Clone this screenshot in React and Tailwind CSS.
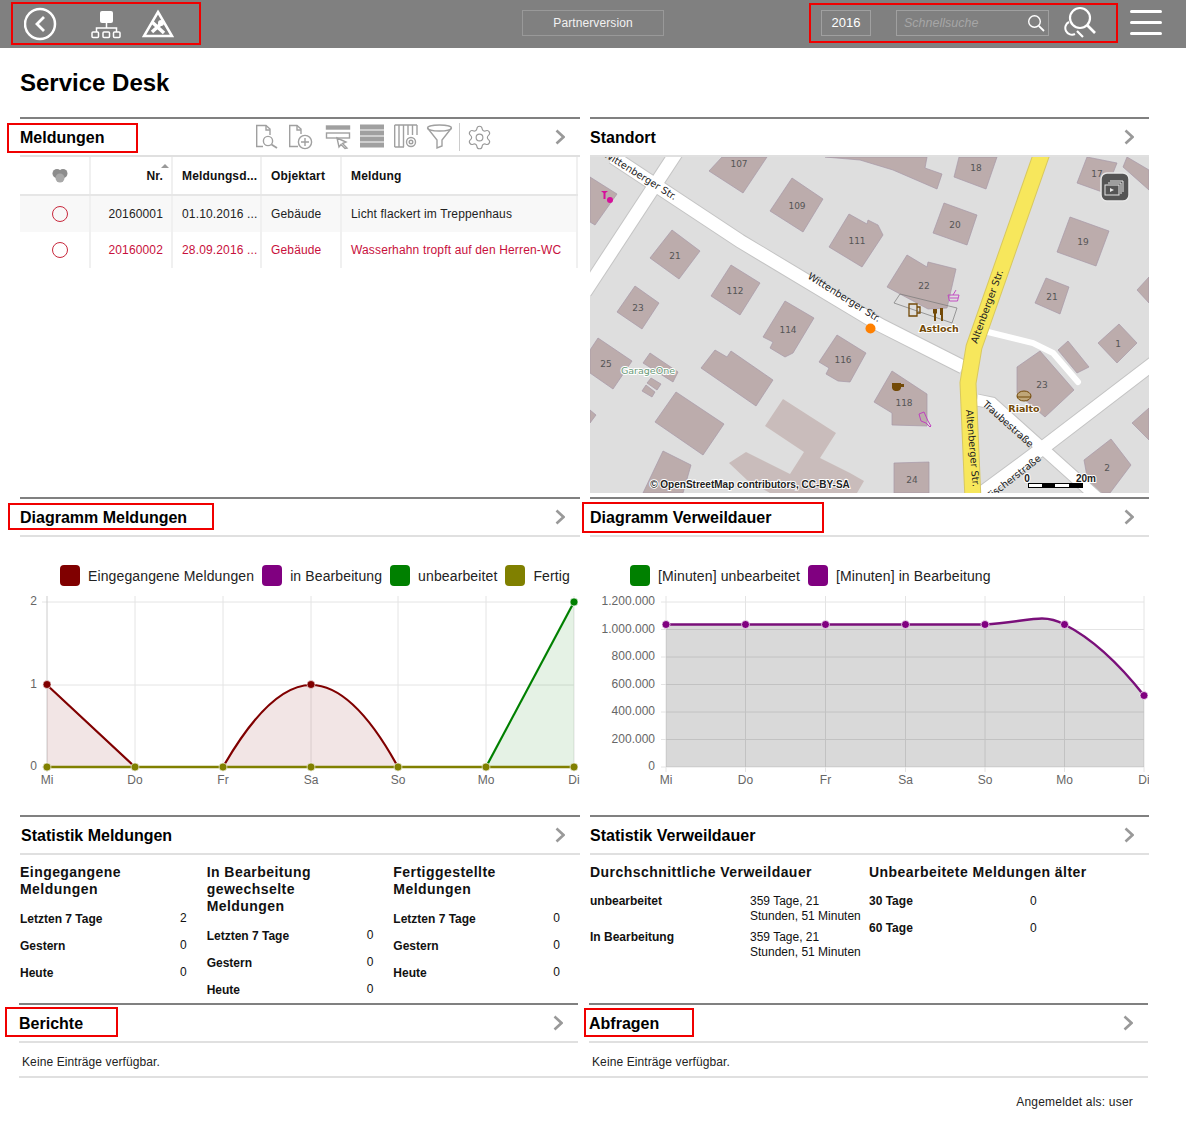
import React from "react";
import { Settings } from "lucide-react";

const buildings = [
  "709,171 743,193 767,157 722,157",
  "792,178 823,199 803,232 770,211",
  "849,214 867,224 868,220 878,225 883,235 862,267 829,247",
  "672,230 700,251 679,279 650,258",
  "731,265 760,283 740,315 711,296",
  "635,286 659,303 642,329 617,312",
  "785,301 814,318 793,353 785,357 770,348 773,342 763,337",
  "837,335 866,353 850,382 838,381 826,374 829,368 819,362",
  "598,338 632,361 613,389 590,373 590,350",
  "650,353 678,372 673,382 643,363",
  "651,378 661,384 657,390 647,383",
  "646,385 655,392 652,397 642,391",
  "715,350 727,357 731,351 773,380 756,406 701,368",
  "676,392 724,424 703,455 655,422",
  "663,451 691,465 683,493 643,493",
  "590,177 617,194 595,225 590,222",
  "590,410 596,415 590,423",
  "825,157 927,157 925,168 942,174 937,189 893,170 860,160",
  "959,157 997,157 986,189 954,177",
  "944,203 977,215 967,245 933,233",
  "907,255 927,267 928,262 956,269 947,308 928,309 887,287",
  "1070,217 1109,231 1096,266 1057,252",
  "1046,278 1069,287 1060,314 1035,303",
  "1119,324 1137,343 1117,363 1098,343",
  "1087,157 1117,163 1105,193 1077,183",
  "1127,157 1149,170 1149,190 1123,167",
  "1137,290 1149,277 1149,303",
  "1068,341 1089,367 1077,373 1058,350",
  "1040,351 1074,390 1045,417 1017,393 1017,367",
  "1149,408 1132,423 1149,440",
  "1111,439 1131,465 1110,493 1090,493 1084,460",
  "892,371 927,394 927,426 892,425 892,413 874,402",
  "894,463 929,462 929,493 894,493",
];

const houseNumbers = [
  ["107", 739, 167], ["109", 797, 209], ["111", 857, 244], ["21", 675, 259], ["112", 735, 294],
  ["23", 638, 311], ["114", 788, 333], ["116", 843, 363], ["25", 606, 367], ["18", 976, 171],
  ["20", 955, 228], ["22", 924, 289], ["19", 1083, 245], ["21", 1052, 300], ["1", 1118, 347],
  ["17", 1097, 177], ["23", 1042, 388], ["2", 1107, 471], ["118", 904, 406], ["24", 912, 483],
];

function MapView() {
  return (
    <svg viewBox="590 157 559 336" className="block w-[559px] h-[336px]" fontFamily="DejaVu Sans">
      <rect x="590" y="157" width="559" height="336" fill="#dedede" />
      <polygon points="783,399 836,433 820,458 850,473 864,481 857,493 770,493 747,480 729,463 746,452 790,474 804,452 765,426" fill="#c9bcbb" />
      <g fill="#bcacac" stroke="#a698a8" strokeWidth="0.7">
        {buildings.map((p, i) => <polygon key={i} points={p} />)}
      </g>
      <polygon points="900,294 957,308 952,323 894,303" fill="none" stroke="#777" strokeWidth="0.7" />

      {/* roads */}
      <g fill="none" stroke="#c4c4c4" strokeWidth="15">
        <path d="M678 150 L585 292" />
        <path d="M613 157 L740 241 L880 325 L963 367" />
        <path d="M977 400 L992 403 L1100 500" strokeWidth="13" />
        <path d="M1155 362 L1040 450 L975 498" />
      </g>
      <g fill="none" stroke="#fff" strokeWidth="13">
        <path d="M678 150 L585 292" />
        <path d="M613 157 L740 241 L880 325 L963 367" />
        <path d="M977 400 L992 403 L1100 500" strokeWidth="11" />
        <path d="M1155 362 L1040 450 L975 498" />
        <path d="M988 332 L1033 343 L1053 353 L1078 382" strokeWidth="6" strokeLinecap="round" />
      </g>
      <path d="M1043 150 L974 347 L968 383 L973 500" fill="none" stroke="#d8c860" strokeWidth="17" />
      <path d="M1043 150 L974 347 L968 383 L973 500" fill="none" stroke="#f7e75c" strokeWidth="15" />

      <g fontSize="9" fill="#555" textAnchor="middle">
        {houseNumbers.map(([t, x, y], i) => <text key={i} x={x} y={y}>{t}</text>)}
      </g>

      <g fontSize="9.800" fill="#222">
        <text transform="translate(603 156) rotate(32)">Wittenberger Str.</text>
        <text transform="translate(807 278) rotate(32)">Wittenberger Str.</text>
        <text transform="translate(977 344) rotate(-70)">Altenberger Str.</text>
        <text transform="translate(966 410) rotate(85)">Altenberger Str.</text>
        <text transform="translate(982 405) rotate(42)">Traubestraße</text>
        <text transform="translate(990 500) rotate(-38)">Fischerstraße</text>
      </g>

      <text x="648" y="374" fontSize="9.500" fill="#6a9a78" textAnchor="middle" stroke="#fff" strokeWidth="2" paintOrder="stroke">GarageOne</text>
      <text x="939" y="332" fontSize="9.500" fontWeight="700" fill="#734a08" textAnchor="middle" stroke="#fff" strokeWidth="2" paintOrder="stroke">Astloch</text>
      <text x="1024" y="412" fontSize="9.500" fontWeight="700" fill="#734a08" textAnchor="middle" stroke="#fff" strokeWidth="2" paintOrder="stroke">Rialto</text>

      {/* pois */}
      <g fill="#d6109a">
        <path d="M601 191 h7 l-2.500 2 v6 h-2 v-6 z" />
        <circle cx="610" cy="200" r="3" />
      </g>
      <g fill="none" stroke="#734a08" strokeWidth="1.300">
        <path d="M909 304 h8 v12 h-8 z M917 307 h3 v6 h-3" />
      </g>
      <path d="M933 309 h4 v4 l-1 1 v7 h-2 v-7 l-1 -1 z M940 308 h3 v13 h-2 v-6 h-1 z" fill="#734a08" />
      <g fill="none" stroke="#c040c0" strokeWidth="0.900">
        <path d="M948 295 h11 l-1.500 6 h-8 z M950 298 h8 M953 295 l3 -5" />
      </g>
      <path d="M892 383 h9 v5 a4 4 0 0 1 -4 3 h-2 a4 4 0 0 1 -3 -3 z M901 384 h3 v3 h-3 z" fill="#734a08" />
      <path d="M919 414 l5 -2 l4 9 l3 5 l-1 1 l-4 -4 l-5 -2 z" fill="none" stroke="#c040c0" strokeWidth="1" />
      <ellipse cx="1024" cy="396" rx="7" ry="5" fill="#bfa678" stroke="#734a08" />
      <path d="M1017 397 h14" stroke="#734a08" />
      <circle cx="870.500" cy="328.500" r="5" fill="#ff8000" />

      {/* layer button */}
      <rect x="1101" y="173" width="28" height="28" rx="6" fill="#555" stroke="#e8e8e8" strokeWidth="1.500" />
      <g fill="none" stroke="#e8e8e8" strokeWidth="1">
        <path d="M1110 181 h13 v11 M1108 183 h13 v11" />
        <rect x="1105" y="185" width="14" height="10" fill="#555" />
      </g>
      <path d="M1110 188 l4 2 l-4 2 z" fill="#e8e8e8" />

      {/* scale + attribution */}
      <text x="750" y="488" fontFamily="Liberation Sans" fontSize="10" fontWeight="700" fill="#222" textAnchor="middle" stroke="#fff" strokeWidth="2" paintOrder="stroke">© OpenStreetMap contributors, CC-BY-SA</text>
      <text x="1027" y="482" fontFamily="Liberation Sans" fontSize="10" fontWeight="700" fill="#222" textAnchor="middle" stroke="#fff" strokeWidth="2" paintOrder="stroke">0</text>
      <text x="1086" y="482" fontFamily="Liberation Sans" fontSize="10" fontWeight="700" fill="#222" textAnchor="middle" stroke="#fff" strokeWidth="2" paintOrder="stroke">20m</text>
      <rect x="1028" y="483" width="55" height="5" fill="#000" />
      <rect x="1029" y="484" width="13" height="3" fill="#fff" />
      <rect x="1055" y="484" width="14" height="3" fill="#fff" />
    </svg>
  );
}

function Chevron() {
  return (
    <svg width="10" height="16" viewBox="0 0 10 16" className="shrink-0">
      <path d="M1.500 1.500 L8.500 8 L1.500 14.500" fill="none" stroke="#999" strokeWidth="2.600" />
    </svg>
  );
}

function Toolbar() {
  return (
    <div className="flex items-center ml-auto mr-[15px]">
      <svg width="206" height="28" viewBox="256 124 206 28" className="shrink-0">
        <g fill="none" stroke="#a0a0a0" strokeWidth="1.400">
          <path d="M270 136 V130 L266 126.500 H256.700 V147.500 H263" />
          <path d="M266 126.500 V131 H270" />
          <circle cx="268" cy="142" r="4.600" />
          <path d="M271.500 145.500 L277 149" strokeWidth="1.800" />

          <path d="M301 135 V130 L297 126.500 H289.700 V147.500 H298" />
          <path d="M297 126.500 V131 H301" />
          <circle cx="305" cy="143" r="6.600" />
          <path d="M305 139 V147 M301 143 H309" />

          <rect x="326.500" y="127" width="23" height="3" fill="#a0a0a0" />
          <rect x="326.500" y="134" width="23" height="5" />
          <path d="M337 139 L346 143 L342.500 144.500 L347 149 L345 149.500 L341 145.500 L339 148 Z" fill="#fff" />

          <path d="M394.700 126 V148 M399 126 V148 M403.500 126 V148 M408 126 V136 M412.500 126 V136 M417 126 V136 M394.700 126 H417 M394.700 148 H404" />
          <circle cx="411" cy="143" r="4.500" />
          <circle cx="411" cy="143" r="1.800" />

          <ellipse cx="439.500" cy="129" rx="12" ry="3" />
          <path d="M427.500 129 L437 141 V149 L442 147 V141 L451.500 129" />
        </g>
        <g fill="#a0a0a0">
          <rect x="360" y="125.500" width="24" height="5" />
          <rect x="360" y="131.500" width="24" height="5" />
          <rect x="360" y="137.500" width="24" height="5" />
          <rect x="360" y="143.500" width="24" height="5" />
          <rect x="459" y="123" width="1" height="30" fill="#ccc" />
        </g>
      </svg>
      <Settings size={27} strokeWidth={1} color="#999" className="ml-[4px] shrink-0" />
      <div className="ml-[62px]"><Chevron /></div>
    </div>
  );
}

function Panel({ title, titleClass, box, toolbar, chevronClass, children, className }) {
  return (
    <section className={"relative border-t-2 border-[#808080] " + (className || "")}>
      <header className="h-[38px] border-b-2 border-[#e0e0e0] flex items-center">
        <h2 className={"mt-[1px] text-[16px] font-bold text-black leading-none " + (titleClass || "")}>{title}</h2>
        {toolbar ? <Toolbar /> : <div className={"ml-auto " + (chevronClass || "mr-[15px]")}><Chevron /></div>}
      </header>
      {box && <div className={"absolute border-2 border-[#f00000] " + box} />}
      {children}
    </section>
  );
}

function RedCircle() {
  return <span className="block w-[16px] h-[16px] rounded-full border-[1.5px] border-[#c8283c]" />;
}

const cellBase = "h-full flex items-center border-r-2 border-[#f0f0f0] text-[12px] tracking-[0.15px] whitespace-nowrap";

function TableRow({ row, striped, red }) {
  const c = red ? "text-[#c8103c]" : "text-[#222]";
  return (
    <div className={"grid grid-cols-[71px_82px_89px_80px_236px] h-[36px] " + (striped ? "bg-[#f8f8f8]" : "bg-white")}>
      <div className={cellBase + " justify-center pl-[10px]"}><RedCircle /></div>
      <div className={cellBase + " justify-end pr-[8px] " + c}>{row[0]}</div>
      <div className={cellBase + " pl-[9px] " + c}>{row[1]}</div>
      <div className={cellBase + " pl-[9px] " + c}>{row[2]}</div>
      <div className={cellBase + " pl-[9px] " + c}>{row[3]}</div>
    </div>
  );
}

function MeldungenTable() {
  const head = cellBase + " font-bold text-[#111]";
  return (
    <div className="w-[558px]">
      <div className="grid grid-cols-[71px_82px_89px_80px_236px] h-[39px] border-b-2 border-[#e6e6e6]">
        <div className={head + " justify-center pl-[10px]"}>
          <svg width="18" height="16" viewBox="0 0 18 16">
            <circle cx="6" cy="5.500" r="4.500" fill="#8c8c8c" />
            <circle cx="12" cy="5.500" r="4.500" fill="#8c8c8c" />
            <circle cx="9" cy="10" r="4.500" fill="#a8a8a8" />
          </svg>
        </div>
        <div className={head + " relative justify-end pr-[8px]"}>
          Nr.
          <span className="absolute right-[2px] top-[7px] w-0 h-0 border-x-[4px] border-x-transparent border-b-[4px] border-b-[#999]" />
        </div>
        <div className={head + " pl-[9px]"}>Meldungsd...</div>
        <div className={head + " pl-[9px]"}>Objektart</div>
        <div className={head + " pl-[9px]"}>Meldung</div>
      </div>
      <TableRow striped row={["20160001", "01.10.2016 ...", "Gebäude", "Licht flackert im Treppenhaus"]} />
      <TableRow red row={["20160002", "28.09.2016 ...", "Gebäude", "Wasserhahn tropft auf den Herren-WC"]} />
    </div>
  );
}

function Legend({ items }) {
  return (
    <div className="flex items-center gap-[8px] pl-[40px] pt-[28px] h-[49px]">
      {items.map(([label, color]) => (
        <React.Fragment key={label}>
          <span className={"block w-[20px] h-[21px] rounded-[4px] " + color} />
          <span className="mt-[1px] text-[14px] tracking-[0.12px] text-[#222] whitespace-nowrap">{label}</span>
        </React.Fragment>
      ))}
    </div>
  );
}

const days = ["Mi", "Do", "Fr", "Sa", "So", "Mo", "Di"];

function ChartLeft() {
  const xs = [47, 135, 223, 311, 398, 486, 574];
  return (
    <svg viewBox="20 590 560 200" className="block w-[560px] h-[200px] mt-[4px]" fontSize="12">
      <g stroke="#e4e4e4">
        <path d="M42 602 H574 M42 685 H574" />
        {xs.slice(1).map((x) => <path key={x} d={`M${x} 596 V772`} />)}
      </g>
      <path d="M47 596 V772 M42 767 H574" stroke="#ccc" />
      <path d="M47 685 L135 767 H47 Z" fill="#800000" fillOpacity="0.1" />
      <path d="M223 767 C250 720 280 685 311 685 C345 685 375 725 398 767 Z" fill="#800000" fillOpacity="0.1" />
      <path d="M486 767 L574 602 V767 Z" fill="#008000" fillOpacity="0.1" />
      <path d="M47 685 L135 767 M223 767 C250 720 280 685 311 685 C345 685 375 725 398 767" fill="none" stroke="#800000" strokeWidth="2.200" />
      <path d="M486 767 L574 602" fill="none" stroke="#008000" strokeWidth="2.200" />
      <path d="M47 767 H574" stroke="#808000" strokeWidth="2.500" />
      <g stroke="#fff" strokeOpacity="0.6">
        <circle cx="47" cy="684.500" r="4" fill="#800000" />
        <circle cx="311" cy="684.500" r="4" fill="#800000" />
        <circle cx="574" cy="602" r="4" fill="#008000" />
        {xs.map((x) => <circle key={x} cx={x} cy="767" r="4" fill="#808000" />)}
      </g>
      <g fill="#666" textAnchor="end">
        <text x="37" y="605">2</text>
        <text x="37" y="688">1</text>
        <text x="37" y="770">0</text>
      </g>
      <g fill="#666" textAnchor="middle">
        {days.map((d, i) => <text key={d} x={xs[i]} y="784">{d}</text>)}
      </g>
    </svg>
  );
}

function ChartRight() {
  const xs = [666, 745.500, 825.500, 905.500, 985, 1064.500, 1144];
  const ticks = [["1.200.000", 602], ["1.000.000", 629.500], ["800.000", 657], ["600.000", 684.500], ["400.000", 712], ["200.000", 739.500], ["0", 767]];
  const line = "M666 624.500 L985 624.500 C1010 623 1030 618.500 1042 618.500 C1050 618.500 1058 621 1064.500 624.500 C1095 640 1120 665 1144 695.500";
  return (
    <svg viewBox="590 590 559 200" className="block w-[559px] h-[200px] mt-[4px]" fontSize="12">
      <g stroke="#e4e4e4">
        {ticks.map(([t, y]) => <path key={t} d={`M661 ${y} H1144`} />)}
        {xs.map((x) => <path key={x} d={`M${x} 596 V772`} />)}
      </g>
      <path d={line + " V767 H666 Z"} fill="#000" fillOpacity="0.15" />
      <path d={line} fill="none" stroke="#7a107a" strokeWidth="2.500" />
      <g stroke="#fff" strokeOpacity="0.7">
        {xs.slice(0, 6).map((x) => <circle key={x} cx={x} cy="624.500" r="4" fill="#800080" />)}
        <circle cx="1144" cy="695.500" r="4" fill="#800080" />
      </g>
      <g fill="#666" textAnchor="end">
        {ticks.map(([t, y]) => <text key={t} x="655" y={y + 3}>{t}</text>)}
      </g>
      <g fill="#666" textAnchor="middle">
        {days.map((d, i) => <text key={d} x={xs[i]} y="784">{d}</text>)}
      </g>
    </svg>
  );
}

function StatHeading({ children }) {
  return <h3 className="text-[14px] font-bold leading-[17px] tracking-[0.45px] text-[#111]">{children}</h3>;
}

function StatColumn({ title, rows }) {
  return (
    <div className="pr-[20px]">
      <StatHeading>{title}</StatHeading>
      <div className="mt-[7px]">
        {rows.map(([label, value]) => (
          <div key={label} className="flex justify-between items-center h-[27px] text-[12px] text-[#111]">
            <span className="font-bold">{label}</span>
            <span className="-mt-[2px]">{value}</span>
          </div>
        ))}
      </div>
    </div>
  );
}

function StatRows({ values }) {
  return [["Letzten 7 Tage", values[0]], ["Gestern", values[1]], ["Heute", values[2]]];
}

export default function App() {
  return (
    <div className="w-full min-h-[1126px] bg-white font-['Liberation_Sans',Arial,sans-serif]">
      {/* top bar */}
      <div className="h-[48px] bg-[#808080] flex items-start">
        <div className="ml-[11px] mt-[2px] w-[190px] h-[43px] border-2 border-[#f00000] flex items-center shrink-0">
          <svg width="164" height="34" viewBox="24 6 164 34" className="ml-[11px]">
            <circle cx="40" cy="23" r="15" fill="none" stroke="#fff" strokeWidth="2.500" />
            <path d="M44 16 L37 23 L44 30" fill="none" stroke="#fff" strokeWidth="2.800" />
            <rect x="100" y="10" width="13" height="12" rx="2" fill="#fff" />
            <path d="M106.500 22 V27 M96.500 31 V27 H116.500 V31" fill="none" stroke="#fff" strokeWidth="1.500" />
            <g fill="none" stroke="#fff" strokeWidth="1.500">
              <rect x="92" y="31" width="6.500" height="5.500" rx="1" />
              <rect x="103" y="31" width="6.500" height="5.500" rx="1" />
              <rect x="113.500" y="31" width="6.500" height="5.500" rx="1" />
            </g>
            <path d="M158 11 L172 35 H144 Z" fill="none" stroke="#fff" strokeWidth="2.500" />
            <path d="M152 31 L164 20 M152 21 L164 32" fill="none" stroke="#fff" strokeWidth="3.500" />
            <circle cx="161" cy="22" r="3" fill="#fff" />
          </svg>
        </div>
        <div className="ml-[321px] mt-[10px] w-[142px] h-[26px] border border-[#999] flex items-center justify-center text-[12px] tracking-[0.1px] text-[#f2f2f2] shrink-0">
          Partnerversion
        </div>
        <div className="ml-[145px] mt-[3px] w-[309px] h-[40px] border-2 border-[#f00000] flex items-center pl-[10px] shrink-0">
          <div className="w-[50px] h-[26px] border border-[#a0a0a0] flex items-center justify-center text-[13px] text-white">2016</div>
          <div className="ml-[25px] w-[153px] h-[26px] border border-[#a0a0a0] flex items-center justify-between pl-[7px] pr-[3px]">
            <span className="text-[12.5px] italic text-[#a6a6a6]">Schnellsuche</span>
            <svg width="18" height="18" viewBox="0 0 18 18">
              <circle cx="7.500" cy="7.500" r="5.800" fill="none" stroke="#fff" strokeWidth="1.400" />
              <path d="M11.800 11.800 L17 17" stroke="#fff" strokeWidth="1.800" />
            </svg>
          </div>
          <svg width="34" height="36" viewBox="1064 5 34 36" className="ml-[15px]">
            <circle cx="1080" cy="18" r="10" fill="none" stroke="#fff" strokeWidth="2.200" />
            <path d="M1087 25 L1095 33" stroke="#fff" strokeWidth="2.600" />
            <path d="M1069 22 A6.500 6.500 0 0 0 1075 34" fill="none" stroke="#fff" strokeWidth="2" />
            <path d="M1077 31 L1083 37" stroke="#fff" strokeWidth="2.200" />
          </svg>
        </div>
        <div className="ml-[12px] mt-[10px] w-[32px] flex flex-col gap-[8px] shrink-0">
          <span className="block h-[3px] rounded-full bg-white" />
          <span className="block h-[3px] rounded-full bg-white" />
          <span className="block h-[3px] rounded-full bg-white" />
        </div>
      </div>

      <h1 className="h-[69px] flex items-center pl-[20px] text-[24px] font-bold text-black">Service Desk</h1>

      {/* row 1 */}
      <div className="ml-[20px] grid grid-cols-[560px_559px] gap-x-[10px]">
        <Panel title="Meldungen" box="left-[-13px] top-[4px] w-[131px] h-[30px]" toolbar className="h-[380px]">
          <MeldungenTable />
        </Panel>
        <Panel title="Standort" className="h-[380px]">
          <MapView />
        </Panel>

        {/* row 2 */}
        <Panel title="Diagramm Meldungen" box="left-[-12px] top-[4px] w-[206px] h-[27px]" className="h-[318px]">
          <Legend items={[
            ["Eingegangene Meldungen", "bg-[#800000]"],
            ["in Bearbeitung", "bg-[#800080]"],
            ["unbearbeitet", "bg-[#008000]"],
            ["Fertig", "bg-[#808000]"],
          ]} />
          <ChartLeft />
        </Panel>
        <Panel title="Diagramm Verweildauer" box="left-[-8px] top-[3px] w-[242px] h-[31px]" className="h-[318px]">
          <Legend items={[
            ["[Minuten] unbearbeitet", "bg-[#008000]"],
            ["[Minuten] in Bearbeitung", "bg-[#800080]"],
          ]} />
          <ChartRight />
        </Panel>

        {/* row 3 */}
        <Panel title="Statistik Meldungen" titleClass="ml-[1px]" className="h-[188px]">
          <div className="grid grid-cols-3 pt-[9px]">
            <StatColumn title={<>Eingegangene<br />Meldungen</>} rows={StatRows({ values: [2, 0, 0] })} />
            <StatColumn title={<>In Bearbeitung<br />gewechselte<br />Meldungen</>} rows={StatRows({ values: [0, 0, 0] })} />
            <StatColumn title={<>Fertiggestellte<br />Meldungen</>} rows={StatRows({ values: [0, 0, 0] })} />
          </div>
        </Panel>
        <Panel title="Statistik Verweildauer" className="h-[188px]">
          <div className="flex pt-[9px]">
            <div className="w-[279px]">
              <StatHeading>Durchschnittliche Verweildauer</StatHeading>
              <div className="mt-[13px] text-[12px] text-[#111] leading-[15px]">
                <div className="flex h-[36px]">
                  <span className="w-[160px] font-bold">unbearbeitet</span>
                  <span className="w-[115px]">359 Tage, 21 Stunden, 51 Minuten</span>
                </div>
                <div className="flex h-[36px]">
                  <span className="w-[160px] font-bold">In Bearbeitung</span>
                  <span className="w-[115px]">359 Tage, 21 Stunden, 51 Minuten</span>
                </div>
              </div>
            </div>
            <div>
              <StatHeading>Unbearbeitete Meldungen älter</StatHeading>
              <div className="mt-[13px] text-[12px] text-[#111] leading-[15px]">
                <div className="flex h-[27px]">
                  <span className="w-[161px] font-bold">30 Tage</span>
                  <span>0</span>
                </div>
                <div className="flex h-[27px]">
                  <span className="w-[161px] font-bold">60 Tage</span>
                  <span>0</span>
                </div>
              </div>
            </div>
          </div>
        </Panel>
      </div>

      {/* row 4 */}
      <div className="ml-[19px] w-[1129px]">
        <div className="grid grid-cols-[559px_559px] gap-x-[11px]">
          <Panel title="Berichte" box="left-[-14px] top-[2px] w-[113px] h-[30px]">
            <p className="h-[33px] flex items-center pt-[5px] pl-[3px] text-[12px] tracking-[0.1px] text-[#222]">Keine Einträge verfügbar.</p>
          </Panel>
          <Panel title="Abfragen" box="left-[-5px] top-[3px] w-[110px] h-[29px]">
            <p className="h-[33px] flex items-center pt-[5px] pl-[3px] text-[12px] tracking-[0.1px] text-[#222]">Keine Einträge verfügbar.</p>
          </Panel>
        </div>
        <div className="h-[2px] bg-[#e0e0e0]" />
      </div>

      <div className="w-[1133px] pt-[15px] text-right text-[12px] tracking-[0.2px] text-[#222]">Angemeldet als: user</div>
    </div>
  );
}
